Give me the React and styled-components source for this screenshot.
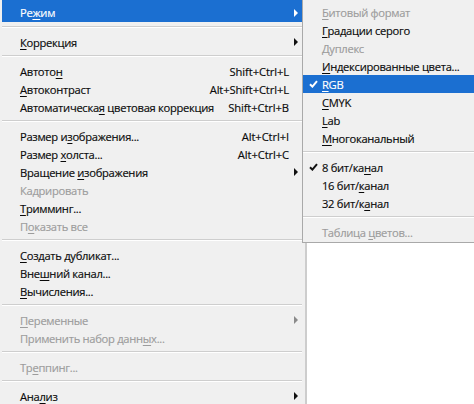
import React from 'react';
import styled, { createGlobalStyle } from 'styled-components';

const GlobalStyle = createGlobalStyle`
	html, body {
		margin: 0;
		padding: 0;
		background: #ffffff;
		overflow: hidden;
	}
`;

const Stage = styled.div`
	position: relative;
	width: 474px;
	height: 404px;
	overflow: hidden;
	font-family: 'Open Sans', 'Noto Sans', sans-serif;
	font-size: 11.2px;
	letter-spacing: -0.3px;
	-webkit-text-stroke: 0.15px currentColor;
`;

const MainMenu = styled.div`
	box-sizing: border-box;
	width: 307px;
	height: 404px;
	padding: 0 3px 0 2px;
	background: #f0f0f0;
	border-right: 2px solid #cdcdcd;
`;

const SubMenu = styled.div`
	position: absolute;
	top: 0;
	left: 302px;
	width: 180px;
	padding: 3px 0 1px;
	background: #f0f0f0;
	border-left: 1px solid #a9a9a9;
	border-bottom: 1px solid #a9a9a9;
`;

const Item = styled.div`
	display: flex;
	align-items: center;
	height: ${(p) => p.$tall ? '22px' : '18px'};
	box-sizing: border-box;
	padding-top: ${(p) => p.$tall ? '3px' : '0'};
	padding-left: 18px;
	white-space: nowrap;
	color: ${(p) => p.$active ? '#ffffff' : p.$disabled ? '#9c9c9c' : '#0a0a0a'};
	background: ${(p) => p.$active ? '#1b6fd1' : 'transparent'};
`;

const Label = styled.span`
	flex: 1;
	u {
		text-decoration: underline;
		text-underline-offset: 2px;
		text-decoration-thickness: 1px;
	}
`;

const Shortcut = styled.span`
	letter-spacing: -0.1px;
`;

const ArrowSlot = styled.span`
	width: 13px;
	display: flex;
	justify-content: center;
	align-items: center;
`;

const Arrow = styled.span`
	width: 0;
	height: 0;
	border-top: 4px solid transparent;
	border-bottom: 4px solid transparent;
	border-left: 4px solid ${(p) => p.$color};
`;

const CheckSlot = styled.span`
	position: relative;
	width: 18px;
	margin-left: -18px;
	display: flex;
	justify-content: center;
	align-items: center;
`;

const Separator = styled.div`
	margin: 4px 0 5px;
	border-top: 1px solid #cecece;
	border-bottom: 1px solid #ffffff;
`;

const Check = ({ color }) => (
	<svg width="9" height="8" viewBox="0 0 9 8">
		<polyline points="1,4.2 3.4,6.6 8,1.2" fill="none" stroke={color} strokeWidth="2" />
	</svg>
);

const MenuItem = ({ children, shortcut, arrow, active, disabled, tall, checked }) => (
	<Item $active={active} $disabled={disabled} $tall={tall}>
		{checked && (
			<CheckSlot>
				<Check color={active ? '#ffffff' : '#111111'} />
			</CheckSlot>
		)}
		<Label>{children}</Label>
		{shortcut && <Shortcut>{shortcut}</Shortcut>}
		{arrow !== undefined && (
			<ArrowSlot>
				{arrow && <Arrow $color={active ? '#ffffff' : disabled ? '#8a8a8a' : '#111111'} />}
			</ArrowSlot>
		)}
	</Item>
);

const SubItem = styled(Item)`
	padding-left: 19px;
`;

const SubMenuItem = ({ children, active, disabled, checked }) => (
	<SubItem $active={active} $disabled={disabled}>
		{checked && (
			<CheckSlot>
				<Check color={active ? '#ffffff' : '#111111'} />
			</CheckSlot>
		)}
		<Label>{children}</Label>
	</SubItem>
);

export default function App() {
	return (
		<Stage>
			<GlobalStyle />
			<MainMenu>
				<MenuItem tall active arrow>Ре<u>ж</u>им</MenuItem>
				<Separator />
				<MenuItem arrow><u>К</u>оррекция</MenuItem>
				<Separator />
				<MenuItem shortcut="Shift+Ctrl+L" arrow={false}>Автото<u>н</u></MenuItem>
				<MenuItem shortcut="Alt+Shift+Ctrl+L" arrow={false}><u>А</u>втоконтраст</MenuItem>
				<MenuItem shortcut="Shift+Ctrl+B" arrow={false}>Автоматическа<u>я</u> цветовая коррекция</MenuItem>
				<Separator />
				<MenuItem shortcut="Alt+Ctrl+I" arrow={false}>Размер и<u>з</u>ображения...</MenuItem>
				<MenuItem shortcut="Alt+Ctrl+C" arrow={false}>Размер <u>х</u>олста...</MenuItem>
				<MenuItem arrow>Вращение <u>и</u>зображения</MenuItem>
				<MenuItem disabled>Кадрировать</MenuItem>
				<MenuItem><u>Т</u>римминг...</MenuItem>
				<MenuItem disabled>П<u>о</u>казать все</MenuItem>
				<Separator />
				<MenuItem><u>С</u>оздать дубликат...</MenuItem>
				<MenuItem>Вне<u>ш</u>ний канал...</MenuItem>
				<MenuItem><u>В</u>ычисления...</MenuItem>
				<Separator />
				<MenuItem disabled arrow><u>П</u>еременные</MenuItem>
				<MenuItem disabled>Применить набор данн<u>ы</u>х...</MenuItem>
				<Separator />
				<MenuItem disabled>Тр<u>е</u>ппинг...</MenuItem>
				<Separator />
				<MenuItem arrow>Ана<u>л</u>из</MenuItem>
			</MainMenu>
			<SubMenu>
				<SubMenuItem disabled><u>Б</u>итовый формат</SubMenuItem>
				<SubMenuItem><u>Г</u>радации серого</SubMenuItem>
				<SubMenuItem disabled><u>Д</u>уплекс</SubMenuItem>
				<SubMenuItem><u>И</u>ндексированные цвета...</SubMenuItem>
				<SubMenuItem active checked><u>R</u>GB</SubMenuItem>
				<SubMenuItem><u>C</u>MYK</SubMenuItem>
				<SubMenuItem><u>L</u>ab</SubMenuItem>
				<SubMenuItem><u>М</u>ногоканальный</SubMenuItem>
				<Separator />
				<SubMenuItem checked>8 бит/ка<u>н</u>ал</SubMenuItem>
				<SubMenuItem>16 бит/<u>к</u>анал</SubMenuItem>
				<SubMenuItem>32 бит/к<u>а</u>нал</SubMenuItem>
				<Separator />
				<SubMenuItem disabled>Таблица <u>ц</u>ветов...</SubMenuItem>
			</SubMenu>
		</Stage>
	);
}
